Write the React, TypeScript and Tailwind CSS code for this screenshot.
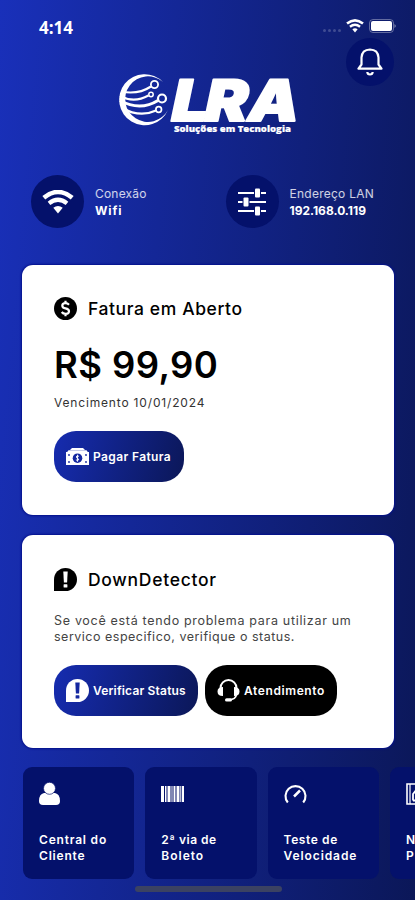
import type { ReactNode } from "react"

function Logo() {
  return (
    <svg width="184" height="68" viewBox="116 70 184 68" fill="none" className="overflow-visible">
      <path d="M163 82 A25.500 25.500 0 1 0 168 110 A22.800 22.800 0 1 1 163 82Z" fill="white" />
      <g stroke="white" strokeWidth="2.200">
        <path d="M121 91.500 Q138 95 151 86.500" />
        <path d="M120 96 Q134 103.500 148.500 95.500" />
        <path d="M120 100.500 Q140 111.500 158 100.500" strokeWidth="3" />
        <path d="M122 108 Q140 118 156 110.500" />
        <circle cx="154.500" cy="84.500" r="3.600" strokeWidth="1.800" />
        <circle cx="151" cy="94.500" r="2.200" strokeWidth="1.500" />
        <circle cx="162" cy="98.500" r="4" strokeWidth="2.200" />
        <circle cx="158.700" cy="109.500" r="2.800" strokeWidth="1.700" />
      </g>
      <text
        x="0 29.500 67.500"
        y="0"
        transform="translate(168.500 121) skewX(-12) scale(1.130 1)"
        className="font-['Inter',sans-serif] text-[57px] font-black"
        fill="white"
        stroke="white"
        strokeWidth="2"
        strokeLinejoin="round"
      >
        LRA
      </text>
      <text
        x="174"
        y="131.500"
        textLength="117"
        lengthAdjust="spacingAndGlyphs"
        className="font-['Open_Sans',sans-serif] text-[9.500px] font-extrabold"
        fill="white"
        stroke="white"
        strokeWidth="0.200"
      >
        Soluções em Tecnologia
      </text>
    </svg>
  )
}

function WifiIcon({ className }: { className: string }) {
  return (
    <svg viewBox="0 0 32 24" className={className} fill="none">
      <path d="M1.800 7.700 Q16 -3.700 30.200 7.700" stroke="white" strokeWidth="4.600" />
      <path d="M7 13.300 Q16 6.200 25 13.300" stroke="white" strokeWidth="4.200" />
      <path d="M11.300 17.800 Q16 14.200 20.700 17.800 L16 23.500Z" fill="white" />
    </svg>
  )
}

function AlertIcon({ fill, mark }: { fill: string; mark: string }) {
  return (
    <svg width="23" height="23" viewBox="0 0 23 23" className="shrink-0">
      <path d="M0 23 V11.500 A11.500 11.500 0 1 1 11.500 23Z" fill={fill} />
      <path d="M9.300 3.500 H13.700 L13.100 14.500 H9.900Z" fill={mark} />
      <rect x="9.600" y="16.200" width="3.800" height="3.300" rx="0.600" fill={mark} />
    </svg>
  )
}

function DollarIcon() {
  return (
    <svg width="23" height="23" viewBox="0 0 23 23" className="shrink-0">
      <circle cx="11.500" cy="11.500" r="11.500" fill="black" />
      <path d="M15 7.700 Q13.600 6.200 11.500 6.200 Q8.300 6.200 8.300 8.700 Q8.300 10.700 11.500 11.400 Q15 12.200 15 14.200 Q15 16.800 11.700 16.800 Q9 16.800 7.700 15 M11.500 3.800 V6.500 M11.500 16.500 V19.200" stroke="white" strokeWidth="2.200" fill="none" />
    </svg>
  )
}

function MoneyIcon() {
  return (
    <svg width="23" height="17" viewBox="0 0 23 17" className="shrink-0">
      <path d="M6 0 H17 L19 2 H4Z M2.500 2.300 H20.500 L22 4.200 H1Z" fill="white" />
      <rect y="4" width="23" height="13" fill="white" />
      <g fill="#1427a0">
        <circle cx="11.500" cy="10.200" r="4.800" />
        <circle cx="3" cy="7" r="0.900" />
        <circle cx="20" cy="7" r="0.900" />
        <circle cx="3" cy="14" r="0.900" />
        <circle cx="20" cy="14" r="0.900" />
      </g>
      <path d="M13 8.300 Q10.200 7.300 10.200 9 Q10.400 10 11.700 10.300 Q13.200 11 12.500 12 Q11.400 12.800 9.900 11.900 M11.500 6.700 V13.700" stroke="white" strokeWidth="0.900" fill="none" />
    </svg>
  )
}

function HeadsetIcon() {
  return (
    <svg width="23" height="23" viewBox="0 0 23 23" className="shrink-0" fill="none">
      <path d="M3.500 10 V9 A8 8 0 0 1 19.500 9 V10" stroke="white" strokeWidth="2" />
      <path d="M6 8 V17 Q0.500 17 0.500 12.500 Q0.500 8 6 8Z M17 8 V17 Q22.500 17 22.500 12.500 Q22.500 8 17 8Z" fill="white" />
      <path d="M19.500 15 Q19 20.500 12 20.800" stroke="white" strokeWidth="1.700" />
      <rect x="8" y="19.200" width="7" height="3.400" rx="1.700" fill="white" />
    </svg>
  )
}

function BellIcon() {
  return (
    <svg width="26" height="28" viewBox="0 0 26 28" fill="none" stroke="white" strokeWidth="2.200">
      <path d="M1.500 20.700 H24.500 L21.500 16.500 V9.500 Q21 1.700 13 1.500 Q5 1.700 4.500 9.500 V16.500Z" strokeLinejoin="round" />
      <path d="M10.300 24 Q10.500 26.500 13 26.500 Q15.500 26.500 15.700 24" />
    </svg>
  )
}

function SlidersIcon() {
  return (
    <svg width="28" height="28" viewBox="0 0 28 28" fill="white">
      <path d="M0 4 H28 V6 H0Z M0 13 H28 V15 H0Z M0 22 H28 V24 H0Z" />
      <path d="M16 0 H23 V10 H16Z M4.500 9 H11.500 V19 H4.500Z M16 18 H23 V28 H16Z" fill="#04116b" />
      <rect x="17" y="0.500" width="5" height="9" rx="1" />
      <rect x="5.500" y="9.500" width="5" height="9" rx="1" />
      <rect x="17" y="18.500" width="5" height="9" rx="1" />
    </svg>
  )
}

const tiles = [
  {
    line1: "Central do",
    line2: "Cliente",
    tracking1: "tracking-[0.8px]",
    tracking2: "tracking-[0.8px]",
    icon: (
      <svg width="23" height="24" viewBox="0 0 23 24" fill="white">
        <path d="M5 11 H16 Q21 12 21 19 Q21 23 17 23 H4 Q0 23 0 19 Q0 12 5 11Z" />
        <circle cx="10.500" cy="6.300" r="6" fill="white" stroke="#04116b" strokeWidth="0.700" />
      </svg>
    ),
  },
  {
    line1: "2ª via de",
    line2: "Boleto",
    tracking1: "tracking-[0.500px]",
    tracking2: "tracking-[1px]",
    icon: (
      <svg width="23" height="24" viewBox="0 0 23 24" fill="white">
        <path d="M0 4 H3 V20 H0Z M4 4 H5.500 V20 H4Z M6.500 4 H9.500 V20 H6.500Z M10.500 4 H11.500 V20 H10.500Z M12.500 4 H14.500 V20 H12.500Z M15.500 4 H18.500 V20 H15.500Z M19.300 4 H20.300 V20 H19.300Z M21 4 H23 V20 H21Z" />
      </svg>
    ),
  },
  {
    line1: "Teste de",
    line2: "Velocidade",
    tracking1: "tracking-[0.600px]",
    tracking2: "tracking-[0.900px]",
    icon: (
      <svg width="23" height="24" viewBox="0 0 23 24" fill="none" stroke="white">
        <path d="M3.800 20.500 A10 10 0 1 1 19.200 20.500" strokeWidth="2.100" />
        <path d="M10 14.500 L16 8.500" strokeWidth="2.500" />
      </svg>
    ),
  },
  {
    line1: "N",
    line2: "P",
    tracking1: "",
    tracking2: "",
    icon: (
      <svg width="23" height="24" viewBox="0 0 23 24" fill="none" stroke="white">
        <path d="M1 2 H22 V22 H1Z" strokeWidth="1.600" />
        <path d="M4 2 V22" strokeWidth="1.200" />
        <path d="M7 18.500 V12 L11 7 L16 12 M7 18.500 H16" strokeWidth="1.800" />
      </svg>
    ),
  },
]

function Connection({ icon, label, value, valueClass }: { icon: ReactNode; label: ReactNode; value: string; valueClass: string }) {
  return (
    <div className="flex items-center">
      <div className="flex h-[53px] w-[53px] shrink-0 items-center justify-center rounded-full bg-[#04116b]">{icon}</div>
      <div className="ml-[11px] whitespace-nowrap text-[12px] leading-[17px] text-white">
        <div className="text-white/80">{label}</div>
        <div className={valueClass}>{value}</div>
      </div>
    </div>
  )
}

export default function App() {
  return (
    <main className="flex h-[900px] w-[415px] flex-col overflow-hidden bg-[linear-gradient(95deg,#1930ba_0%,#0b1758_100%)] font-['Inter','Noto_Sans',sans-serif]">
      <header className="flex h-[70px] shrink-0 justify-between pl-[39px] pr-[19px] pt-[19px]">
        <div className="font-['Open_Sans',sans-serif] text-[17px] font-bold leading-[17px] text-white">4:14</div>
        <div className="flex h-[14px] items-center">
          <div className="mr-[5px] mt-[9px] flex gap-[2px]">
            <span className="h-[3px] w-[3px] rounded-full bg-white/20" />
            <span className="h-[3px] w-[3px] rounded-full bg-white/20" />
            <span className="h-[3px] w-[3px] rounded-full bg-white/20" />
            <span className="h-[3px] w-[3px] rounded-full bg-white/20" />
          </div>
          <WifiIcon className="mr-[5px] h-[14px] w-[18px]" />
          <svg width="27" height="14" viewBox="0 0 27 14">
            <rect x="0.500" y="0.500" width="24" height="13" rx="3.500" fill="none" stroke="white" strokeOpacity="0.35" />
            <rect x="2" y="2" width="21" height="10" rx="2" fill="white" />
            <path d="M25.500 5 Q28 7 25.500 9Z" fill="white" fillOpacity="0.5" />
          </svg>
        </div>
      </header>

      <div className="-mt-[32px] flex h-[48px] shrink-0 justify-end pr-[21px]">
        <div className="flex h-12 w-12 items-center justify-center rounded-full bg-[#04116b]">
          <BellIcon />
        </div>
      </div>
      <div className="-mt-[16px] ml-[116px] h-[68px] shrink-0">
        <Logo />
      </div>

      <section className="mt-[37px] flex h-[53px] shrink-0 pl-[31px]">
        <div className="w-[194.500px]">
          <Connection
            icon={<WifiIcon className="h-6 w-8" />}
            label={<span className="tracking-[0.2px]">Conexão</span>}
            value="Wifi"
            valueClass="font-bold tracking-[0.9px]"
          />
        </div>
        <Connection
          icon={<SlidersIcon />}
          label={<span className="tracking-[0.25px]">Endereço LAN</span>}
          value="192.168.0.119"
          valueClass="font-bold"
        />
      </section>

      <section className="ml-[22px] mt-[37px] h-[250px] w-[372px] shrink-0 rounded-[11px] bg-white pl-8 pt-8 text-black shadow-[0_0_2px_1px_#04118c]">
        <div className="flex h-[23px] items-center gap-[11px]">
          <DollarIcon />
          <h2 className="pt-[2px] text-[17.500px] font-medium tracking-[0.600px]">Fatura em Aberto</h2>
        </div>
        <div className="mt-[25px] text-[36.500px] font-semibold leading-[40px] tracking-[0.400px]">R$ 99,90</div>
        <div className="mt-[9px] text-[12px] leading-[18px] tracking-[0.830px] text-[#333]">Vencimento 10/01/2024</div>
        <button className="mt-[19px] flex h-[51px] w-[130px] items-center gap-[4px] whitespace-nowrap rounded-[22px] bg-[linear-gradient(105deg,#162cb0,#0b1758)] pl-[12px] text-[12px] font-semibold text-white">
          <MoneyIcon />
          <span className="tracking-[0.380px]">Pagar Fatura</span>
        </button>
      </section>

      <section className="ml-[22px] mt-[20px] h-[213px] w-[372px] shrink-0 rounded-[11px] bg-white pl-8 pt-[33px] text-black shadow-[0_0_2px_1px_#04118c]">
        <div className="flex h-[23px] items-center gap-[11px]">
          <AlertIcon fill="black" mark="white" />
          <h2 className="pt-[2px] text-[17.500px] font-medium tracking-[0.720px]">DownDetector</h2>
        </div>
        <p className="mt-[22px] whitespace-nowrap text-[12.500px] leading-[16px] text-[#444]">
          <span className="tracking-[0.690px]">Se você está tendo problema para utilizar um</span>
          <br />
          <span className="tracking-[0.500px]">servico especifico, verifique o status.</span>
        </p>
        <div className="mt-[20px] flex gap-[7px] whitespace-nowrap text-[12px] font-semibold text-white">
          <button className="flex h-[51px] w-[144px] items-center gap-[4px] rounded-[22px] bg-[linear-gradient(105deg,#162cb0,#0b1758)] pl-[12px]">
            <AlertIcon fill="white" mark="#1427a0" />
            <span className="tracking-[0.180px]">Verificar Status</span>
          </button>
          <button className="flex h-[51px] w-[132px] items-center gap-[4px] rounded-[22px] bg-black pl-[12px]">
            <HeadsetIcon />
            <span className="tracking-[0.600px]">Atendimento</span>
          </button>
        </div>
      </section>

      <nav className="ml-[23px] mt-[19px] flex h-[112px] shrink-0 gap-[11px]">
        {tiles.map((tile) => (
          <div key={tile.line1} className="h-[112px] w-[111.300px] shrink-0 rounded-[9px] bg-[#04116b] pl-4 pt-[15px] text-white">
            {tile.icon}
            <div className="mt-[26px] whitespace-nowrap text-[12px] font-semibold leading-[16px]">
              <div className={tile.tracking1}>{tile.line1}</div>
              <div className={tile.tracking2}>{tile.line2}</div>
            </div>
          </div>
        ))}
      </nav>
      <div className="ml-[135px] mt-[7px] h-[6px] w-[147px] shrink-0 rounded-full bg-[#3b4262]" />
    </main>
  )
}
